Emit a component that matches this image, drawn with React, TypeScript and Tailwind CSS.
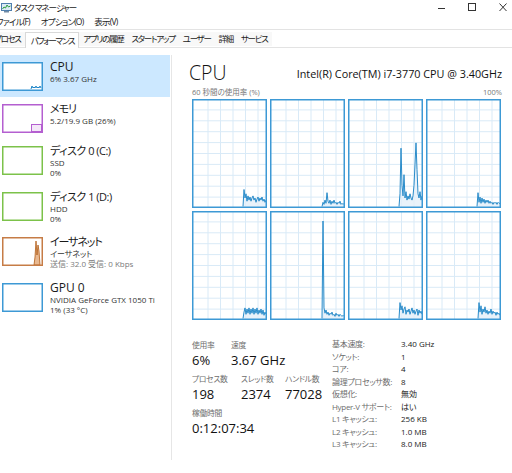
import React from "react";

type Pt = [number, number];

const FONT =
  "font-['Segoe_UI','Open_Sans','Noto_Sans_CJK_JP',sans-serif] [font-feature-settings:'palt']";

// per-core history, x in px inside a 75px graph, y in percent
const cores: Pt[][] = [
  [[51, 0], [52, 16], [53, 8], [54, 12], [55, 5], [56, 10], [57, 6], [58, 9], [59, 5], [60, 8], [61, 10], [62, 6], [63, 8], [64, 4], [65, 7], [66, 9], [67, 5], [68, 8], [69, 6], [70, 9], [71, 5], [72, 7], [73, 4], [74, 6]],
  [[52, 0], [53, 4], [54, 2], [55, 6], [56, 3], [57, 13], [58, 5], [59, 3], [60, 6], [61, 2], [62, 5], [63, 3], [64, 6], [65, 3], [66, 4], [67, 2], [68, 4], [69, 3], [70, 5], [71, 2], [72, 3], [73, 2], [74, 3]],
  [[51, 0], [52, 12], [53, 55], [54, 20], [55, 10], [56, 30], [57, 8], [58, 14], [59, 6], [60, 10], [61, 7], [62, 12], [63, 8], [64, 6], [65, 10], [66, 20], [67, 40], [68, 60], [69, 35], [70, 12], [71, 8], [72, 14], [73, 6], [74, 10]],
  [[51, 0], [52, 13], [53, 4], [54, 9], [55, 3], [56, 8], [57, 4], [58, 7], [59, 3], [60, 6], [61, 4], [62, 6], [63, 3], [64, 5], [65, 3], [66, 4], [67, 2], [68, 4], [69, 3], [70, 4], [71, 2], [72, 4], [73, 3], [74, 3]],
  [[51, 0], [52, 6], [53, 10], [54, 4], [55, 9], [56, 5], [57, 10], [58, 4], [59, 9], [60, 5], [61, 10], [62, 4], [63, 9], [64, 5], [65, 10], [66, 4], [67, 8], [68, 5], [69, 9], [70, 4], [71, 8], [72, 3], [73, 6], [74, 4]],
  [[52, 0], [53, 92], [54, 10], [55, 5], [56, 8], [57, 4], [58, 6], [59, 3], [60, 5], [61, 4], [62, 6], [63, 3], [64, 4], [65, 2], [66, 5], [67, 3], [68, 4], [69, 2], [70, 4], [71, 3], [72, 2], [73, 3], [74, 2]],
  [[51, 0], [52, 15], [53, 8], [54, 12], [55, 5], [56, 9], [57, 11], [58, 4], [59, 8], [60, 6], [61, 9], [62, 4], [63, 7], [64, 10], [65, 5], [66, 8], [67, 4], [68, 7], [69, 9], [70, 3], [71, 8], [72, 5], [73, 7], [74, 4]],
  [[52, 0], [53, 15], [54, 6], [55, 12], [56, 4], [57, 9], [58, 6], [59, 11], [60, 5], [61, 8], [62, 4], [63, 7], [64, 5], [65, 9], [66, 4], [67, 7], [68, 5], [69, 6], [70, 3], [71, 6], [72, 4], [73, 5], [74, 3]],
];

function CoreGraph({ pts }: { pts: Pt[] }) {
  const W = 75;
  const H = 109;
  const ys = (p: number) => (H - 1.5 - (p * (H - 3)) / 100).toFixed(1);
  const line = pts.map(([x, p]) => `${x},${ys(p)}`).join(" ");
  const fill = `${pts[0][0]},${H - 1} ${line} ${pts[pts.length - 1][0]},${H - 1}`;
  const hLines = Array.from({ length: 9 }, (_, i) => ((i + 1) * H) / 10);
  const vLines = [16, 28.5, 41, 53.5, 66];
  return (
    <svg width={W} height={H} className="block">
      <rect x="0" y="0" width={W} height={H} fill="#ffffff" />
      {hLines.map((y) => (
        <line key={"h" + y} x1="0" x2={W} y1={y} y2={y} stroke="#d9eaf7" strokeWidth="1" />
      ))}
      {vLines.map((x) => (
        <line key={"v" + x} x1={x} x2={x} y1="0" y2={H} stroke="#d9eaf7" strokeWidth="1" />
      ))}
      <polygon points={fill} fill="#e3eff9" opacity="0.8" />
      <polyline points={line} fill="none" stroke="#2a8cca" strokeWidth="1" />
      <rect x="0.75" y="0.75" width={W - 1.5} height={H - 1.5} fill="none" stroke="#3d99d5" strokeWidth="1.5" />
    </svg>
  );
}

function Thumb({ color, children }: { color: string; children?: React.ReactNode }) {
  return (
    <svg width="41" height="29" className="block shrink-0">
      <rect x="0" y="0" width="41" height="29" fill="#ffffff" />
      {children}
      <rect x="0.75" y="0.75" width="39.5" height="27.5" fill="none" stroke={color} strokeWidth="1.5" />
    </svg>
  );
}

type Item = {
  title: string;
  titleCls: string;
  lines: string[];
  h: string;
  thumb: React.ReactNode;
  selected?: boolean;
  dimLast?: boolean;
};

const items: Item[] = [
  {
    title: "CPU",
    titleCls: "text-[12px]",
    lines: ["6%  3.67 GHz"],
    h: "h-[42px]",
    selected: true,
    thumb: (
      <Thumb color="#3d99d5">
        <polyline
          points="29,27 30,24 31,26 32,25 33,26 34,24 35,26 36,25 37,26 38,24 39,26"
          fill="none"
          stroke="#1f86c8"
          strokeWidth="1"
        />
      </Thumb>
    ),
  },
  {
    title: "メモリ",
    titleCls: "text-[11px] tracking-[-1px]",
    lines: ["5.2/19.9 GB (26%)"],
    h: "h-[42px]",
    thumb: (
      <Thumb color="#b45fd0">
        <rect x="29.5" y="20.5" width="10" height="7" fill="#f4e8f8" stroke="#b45fd0" strokeWidth="1" />
      </Thumb>
    ),
  },
  {
    title: "ディスク 0 (C:)",
    titleCls: "text-[11px] tracking-[-0.5px]",
    lines: ["SSD", "0%"],
    h: "h-[46px]",
    thumb: <Thumb color="#7cc24a" />,
  },
  {
    title: "ディスク 1 (D:)",
    titleCls: "text-[11px] tracking-[-0.5px]",
    lines: ["HDD", "0%"],
    h: "h-[45px]",
    thumb: <Thumb color="#7cc24a" />,
  },
  {
    title: "イーサネット",
    titleCls: "text-[11px] tracking-[-1.1px]",
    lines: ["イーサネット", "送信: 32.0 受信: 0 Kbps"],
    h: "h-[46px]",
    dimLast: true,
    thumb: (
      <Thumb color="#c67c46">
        <polygon
          points="32,28 33,20 34,4 35,18 36,8 37,14 38,28"
          fill="#e8b890"
          stroke="#b05a14"
          strokeWidth="0.8"
        />
      </Thumb>
    ),
  },
  {
    title: "GPU 0",
    titleCls: "text-[12px]",
    lines: ["NVIDIA GeForce GTX 1050 Ti", "1%  (33 °C)"],
    h: "h-[46px]",
    thumb: <Thumb color="#3d99d5" />,
  },
];

const details: [string, string][] = [
  ["基本速度:", "3.40 GHz"],
  ["ソケット:", "1"],
  ["コア:", "4"],
  ["論理プロセッサ数:", "8"],
  ["仮想化:", "無効"],
  ["Hyper-V サポート:", "はい"],
  ["L1 キャッシュ:", "256 KB"],
  ["L2 キャッシュ:", "1.0 MB"],
  ["L3 キャッシュ:", "8.0 MB"],
];

const tabs = ["プロセス", "パフォーマンス", "アプリの履歴", "スタートアップ", "ユーザー", "詳細", "サービス"];

function AppIcon() {
  return (
    <svg width="11" height="10" viewBox="0 0 11 10" className="block">
      <rect x="0.5" y="0.5" width="10" height="7" fill="#dbe9f5" stroke="#4f7fae" />
      <polyline points="1.5,6 3,4 4.5,5 6,2 7.5,4 9.5,3" fill="none" stroke="#2f9e3f" strokeWidth="1" />
      <rect x="3" y="8" width="5" height="1.5" fill="#6f8aa5" />
    </svg>
  );
}

export default function App() {
  return (
    <div className={`w-[512px] h-[473px] bg-white overflow-hidden text-[#1a1a1a] ${FONT}`}>
      {/* title bar */}
      <div className="h-[15px] flex items-center">
        <div className="ml-[1px] mr-[2px]">
          <AppIcon />
        </div>
        <span className="text-[8.5px] tracking-[-1px] leading-[14px] text-[#222]">タスク マネージャー</span>
        <div className="ml-auto flex items-center gap-[23px] pr-[5px]">
          <svg width="7" height="9" className="block">
            <line x1="0" x2="7" y1="5.5" y2="5.5" stroke="#333" strokeWidth="1" />
          </svg>
          <svg width="8" height="9" className="block">
            <rect x="0.5" y="0.5" width="7" height="7" fill="none" stroke="#333" strokeWidth="1" />
          </svg>
          <svg width="8" height="9" className="block">
            <path d="M0.5 0.5 L7.5 8 M7.5 0.5 L0.5 8" stroke="#333" strokeWidth="1" />
          </svg>
        </div>
      </div>

      {/* menu */}
      <div className="h-[14px] flex items-center -ml-[9px] text-[8.5px] tracking-[-0.8px] leading-[14px] text-[#222]">
        <span className="px-[5.5px]">ファイル(F)</span>
        <span className="px-[5.5px]">オプション(O)</span>
        <span className="px-[5.5px]">表示(V)</span>
      </div>

      {/* tabs */}
      <div className="h-[19px] border-t border-b border-[#e3e3e3] flex items-end -ml-[10px] text-[8.5px] tracking-[-1.3px]">
        {tabs.map((t) =>
          t === "パフォーマンス" ? (
            <div
              key={t}
              className="h-[16px] -mb-px bg-white border-l border-r border-t border-[#d9d9d9] pl-[5px] pr-[4px] leading-[15px] text-[#1a1a1a]"
            >
              {t}
            </div>
          ) : (
            <div key={t} className="h-[14px] mb-[1px] bg-[#f8f8f8] px-[4px] leading-[14px] text-[#222]">
              {t}
            </div>
          )
        )}
      </div>

      {/* body */}
      <div className="flex h-[425px]">
        <div className="w-[173px] shrink-0 pt-[7px]">
          <div className="w-[172px] h-[405px] border-r border-[#e6e6e6]">
            {items.map((it) => (
              <div
                key={it.title}
                className={`${it.h} w-[170px] flex items-start pl-[2px] pt-[7px] ${it.selected ? "bg-[#cce8ff]" : ""}`}
              >
                {it.thumb}
                <div className="ml-[7px] -mt-[2px]">
                  <div className={`${it.titleCls} leading-[14px] text-[#1a1a1a] whitespace-nowrap`}>{it.title}</div>
                  {it.lines.map((l, i) => (
                    <div
                      key={l}
                      className={`text-[8px] leading-[10px] whitespace-nowrap ${
                        it.dimLast && i === it.lines.length - 1 ? "text-[#7a7a7a]" : "text-[#333]"
                      }`}
                    >
                      {l}
                    </div>
                  ))}
                </div>
              </div>
            ))}
          </div>
        </div>

        <div className="flex-1 pl-[19px] pr-[10px]">
          <div className="flex items-end justify-between mt-[10px] h-[28px]">
            <span className="text-[19.5px] leading-[26px] font-light -ml-[3px] text-[#111]">CPU</span>
            <span className="text-[10.8px] leading-[16px] mb-[4px] text-[#111] whitespace-nowrap">
              Intel(R) Core(TM) i7-3770 CPU @ 3.40GHz
            </span>
          </div>
          <div className="flex justify-between text-[7.5px] leading-[10px] text-[#777] mt-[1px]">
            <span>60 秒間の使用率 (%)</span>
            <span>100%</span>
          </div>
          <div className="grid grid-cols-4 gap-[3px] w-[309px] mt-[2px]">
            {cores.map((c, i) => (
              <CoreGraph key={i} pts={c} />
            ))}
          </div>

          <div className="flex mt-[19px]">
            <div className="w-[140px] shrink-0">
              <div className="flex text-[7.8px] tracking-[-0.3px] leading-[12px] text-[#6d6d6d]">
                <span className="w-[39px]">使用率</span>
                <span>速度</span>
              </div>
              <div className="flex text-[13px] leading-[18px] text-[#111]">
                <span className="w-[39px]">6%</span>
                <span>3.67 GHz</span>
              </div>
              <div className="flex text-[7.8px] tracking-[-0.3px] leading-[12px] text-[#6d6d6d] mt-[4px]">
                <span className="w-[49px]">プロセス数</span>
                <span className="w-[44px]">スレッド数</span>
                <span>ハンドル数</span>
              </div>
              <div className="flex text-[13px] leading-[18px] text-[#111]">
                <span className="w-[49px]">198</span>
                <span className="w-[44px]">2374</span>
                <span>77028</span>
              </div>
              <div className="text-[7.8px] tracking-[-0.3px] leading-[12px] text-[#6d6d6d] mt-[4px]">稼働時間</div>
              <div className="text-[13px] leading-[18px] text-[#111]">0:12:07:34</div>
            </div>
            <div className="grid grid-cols-[69px_auto] text-[8px] leading-[12.5px] -mt-[1px]">
              {details.map(([k, v]) => (
                <React.Fragment key={k}>
                  <span className="text-[#6d6d6d] tracking-[-0.3px] whitespace-nowrap">{k}</span>
                  <span className="text-[#1a1a1a]">{v}</span>
                </React.Fragment>
              ))}
            </div>
          </div>
        </div>
      </div>
    </div>
  );
}
